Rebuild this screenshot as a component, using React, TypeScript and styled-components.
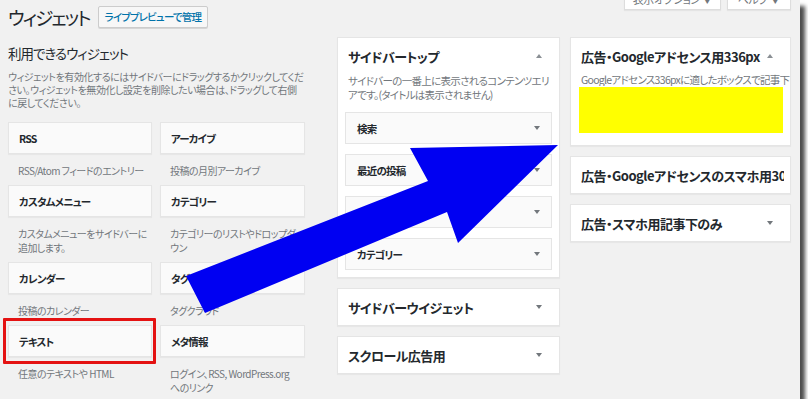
import React from "react";
import styled, { createGlobalStyle } from "styled-components";

const Global = createGlobalStyle`
  html, body { margin: 0; padding: 0; background: #fff; }
  body {
    font-family: "Noto Sans CJK JP", "Noto Sans", sans-serif;
    font-feature-settings: "palt";
    color: #23282d;
  }
  * { box-sizing: border-box; }
`;

const Screen = styled.div`
  position: relative;
  width: 800px;
  height: 399px;
  background: #f1f1f1;
  padding: 0 9px 0 8px;
  box-shadow: 5px 6px 4px rgba(0, 0, 0, 0.7);
`;

const Clip = styled.div`
  position: absolute;
  inset: 0;
  overflow: hidden;
  pointer-events: none;
`;

const Header = styled.div`
  display: flex;
  align-items: flex-start;
  height: 37px;
`;

const TitleGroup = styled.div`
  display: flex;
  align-items: center;
  gap: 8px;
  padding-top: 5px;
`;

const PageTitle = styled.h1`
  margin: 0;
  font-size: 18.5px;
  font-weight: 400;
  letter-spacing: -1.9px;
  line-height: 24px;
  color: #23282d;
`;

const LiveButton = styled.span`
  height: 22px;
  padding: 0 6px;
  border: 1px solid #cccccc;
  border-radius: 2px;
  background: #f7f7f7;
  box-shadow: 0 1px 0 #d6d6d6;
  color: #0073aa;
  font-size: 10.5px;
  font-weight: 500;
  letter-spacing: -0.8px;
  line-height: 20px;
`;

const MetaLinks = styled.div`
  margin-left: auto;
  margin-top: -12px;
  display: flex;
  gap: 6px;
`;

const MetaLink = styled.span<{ $w: number }>`
  width: ${(p) => p.$w}px;
  height: 22px;
  background: #fff;
  border: 1px solid #dddddd;
  border-top: none;
  box-shadow: 0 1px 1px rgba(0, 0, 0, 0.05);
  color: #72777c;
  font-size: 11px;
  letter-spacing: -0.5px;
  line-height: 22px;
  text-align: center;
`;

const Columns = styled.div`
  display: flex;
  align-items: flex-start;
`;

const Available = styled.div`
  width: 297px;
  margin-right: 32px;
`;

const SectionTitle = styled.h2`
  margin: 6px 0 0;
  font-size: 13.5px;
  font-weight: 400;
  letter-spacing: -1px;
  line-height: 20px;
`;

const SectionDesc = styled.p`
  margin: 7px 0 0;
  font-size: 10px;
  letter-spacing: -0.45px;
  line-height: 13px;
  color: #72777c;
`;

const WidgetGrid = styled.div`
  margin-top: 13px;
  display: grid;
  grid-template-columns: 144px 145px;
  column-gap: 8px;
`;

const WidgetItem = styled.div``;

const WidgetCard = styled.div`
  position: relative;
  height: 32px;
  display: flex;
  align-items: center;
  padding: 0 10px;
  background: #fafafa;
  border: 1px solid #e5e5e5;
  box-shadow: 0 1px 1px rgba(0, 0, 0, 0.04);
  font-size: 10.5px;
  font-weight: 600;
  letter-spacing: -0.8px;
`;

const RedMark = styled.div`
  position: absolute;
  top: -8px;
  left: -6px;
  right: -5px;
  bottom: -8px;
  border: 3px solid #e41212;
  border-radius: 1px;
`;

const WidgetDesc = styled.div`
  margin-top: 10px;
  padding: 0 2px 7px 10px;
  font-size: 10px;
  letter-spacing: -0.55px;
  line-height: 14px;
  color: #72777c;
`;

const Keep = styled.span`
  white-space: nowrap;
`;

const SideColumn = styled.div<{ $w: number; $mr?: number }>`
  width: ${(p) => p.$w}px;
  margin-right: ${(p) => p.$mr ?? 0}px;
  display: flex;
  flex-direction: column;
  gap: 10px;
`;

const Panel = styled.div`
  background: #fff;
  border: 1px solid #e5e5e5;
  box-shadow: 0 1px 1px rgba(0, 0, 0, 0.04);
  overflow: hidden;
`;

const PanelHead = styled.div<{ $tight?: boolean }>`
  height: 36px;
  display: flex;
  align-items: center;
  padding: 0 ${(p) => (p.$tight ? 6 : 17)}px 0 10px;
  font-size: 13px;
  font-weight: 600;
  letter-spacing: -0.5px;
  white-space: nowrap;
  overflow: hidden;
`;

const PanelTitle = styled.span`
  flex: 1;
  overflow: hidden;
`;

const Toggle = styled.span<{ $up?: boolean }>`
  flex: none;
  width: 0;
  height: 0;
  border-left: 3.5px solid transparent;
  border-right: 3.5px solid transparent;
  ${(p) =>
    p.$up
      ? "border-bottom: 4px solid #8a8f94;"
      : "border-top: 4px solid #72777c;"}
`;

const PanelDesc = styled.div<{ $nowrap?: boolean }>`
  padding: 0 6px 0 10px;
  font-size: 10.5px;
  letter-spacing: -0.7px;
  line-height: ${(p) => (p.$nowrap ? 12 : 14)}px;
  color: #72777c;
  white-space: ${(p) => (p.$nowrap ? "nowrap" : "normal")};
  overflow: hidden;
`;

const InnerList = styled.div`
  margin-top: 10px;
  padding: 0 7px 7px;
  display: flex;
  flex-direction: column;
  gap: 10px;
`;

const InnerCard = styled.div`
  height: 32px;
  display: flex;
  align-items: center;
  justify-content: space-between;
  padding: 0 11px;
  background: #fafafa;
  border: 1px solid #e5e5e5;
  font-size: 10.5px;
  font-weight: 600;
  letter-spacing: -0.8px;
`;

const AdBox = styled.div`
  height: 46px;
  margin: 1px 7px 12px 8px;
  background: #ffff00;
`;

const ArrowLayer = styled.svg`
  position: absolute;
  left: 0;
  top: 0;
`;

const widgets: { t: string; d: React.ReactNode; mark?: boolean }[] = [
  { t: "RSS", d: "RSS/Atom フィードのエントリー" },
  { t: "アーカイブ", d: "投稿の月別アーカイブ" },
  { t: "カスタムメニュー", d: "カスタムメニューをサイドバーに追加します。" },
  { t: "カテゴリー", d: "カテゴリーのリストやドロップダウン" },
  { t: "カレンダー", d: "投稿のカレンダー" },
  { t: "タグクラウド", d: "タグクラウド" },
  { t: "テキスト", d: "任意のテキストや HTML", mark: true },
  {
    t: "メタ情報",
    d: (
      <>
        ログイン、RSS, WordPress.org <Keep>へのリンク</Keep>
      </>
    ),
  },
];

export default function App() {
  return (
    <>
      <Global />
      <Screen>
        <Header>
          <TitleGroup>
            <PageTitle>ウィジェット</PageTitle>
            <LiveButton>ライブプレビューで管理</LiveButton>
          </TitleGroup>
          <MetaLinks>
            <MetaLink $w={97}>表示オプション ▼</MetaLink>
            <MetaLink $w={64}>ヘルプ ▼</MetaLink>
          </MetaLinks>
        </Header>
        <Columns>
          <Available>
            <SectionTitle>利用できるウィジェット</SectionTitle>
            <SectionDesc>
              ウィジェットを有効化するにはサイドバーにドラッグするかクリックしてください。ウィジェットを無効化し設定を削除したい場合は、ドラッグして右側に戻してください。
            </SectionDesc>
            <WidgetGrid>
              {widgets.map((w) => (
                <WidgetItem key={w.t}>
                  <WidgetCard>
                    {w.t}
                    {w.mark && <RedMark />}
                  </WidgetCard>
                  <WidgetDesc>{w.d}</WidgetDesc>
                </WidgetItem>
              ))}
            </WidgetGrid>
          </Available>
          <SideColumn $w={223} $mr={10}>
            <Panel>
              <PanelHead>
                <PanelTitle>サイドバートップ</PanelTitle>
                <Toggle $up />
              </PanelHead>
              <PanelDesc>
                サイドバーの一番上に表示されるコンテンツエリアです。(タイトルは表示されません)
              </PanelDesc>
              <InnerList>
                {["検索", "最近の投稿", "アーカイブ", "カテゴリー"].map((t) => (
                  <InnerCard key={t}>
                    {t}
                    <Toggle />
                  </InnerCard>
                ))}
              </InnerList>
            </Panel>
            <Panel>
              <PanelHead>
                <PanelTitle>サイドバーウイジェット</PanelTitle>
                <Toggle />
              </PanelHead>
            </Panel>
            <Panel>
              <PanelHead>
                <PanelTitle>スクロール広告用</PanelTitle>
                <Toggle />
              </PanelHead>
            </Panel>
          </SideColumn>
          <SideColumn $w={221}>
            <Panel>
              <PanelHead>
                <PanelTitle>広告・Googleアドセンス用336px</PanelTitle>
                <Toggle $up />
              </PanelHead>
              <PanelDesc $nowrap>
                Googleアドセンス336pxに適したボックスで記事下に表示します
              </PanelDesc>
              <AdBox />
            </Panel>
            <Panel>
              <PanelHead $tight>
                <PanelTitle>広告・Googleアドセンスのスマホ用300px</PanelTitle>
              </PanelHead>
            </Panel>
            <Panel>
              <PanelHead>
                <PanelTitle>広告・スマホ用記事下のみ</PanelTitle>
                <Toggle />
              </PanelHead>
            </Panel>
          </SideColumn>
        </Columns>
        <Clip>
          <ArrowLayer width={800} height={399} viewBox="0 0 800 399">
            <polygon
              points="186,276 428,181 410,148 558,145 458,243 447,212 205,313"
              fill="#0000f2"
            />
          </ArrowLayer>
        </Clip>
      </Screen>
    </>
  );
}
